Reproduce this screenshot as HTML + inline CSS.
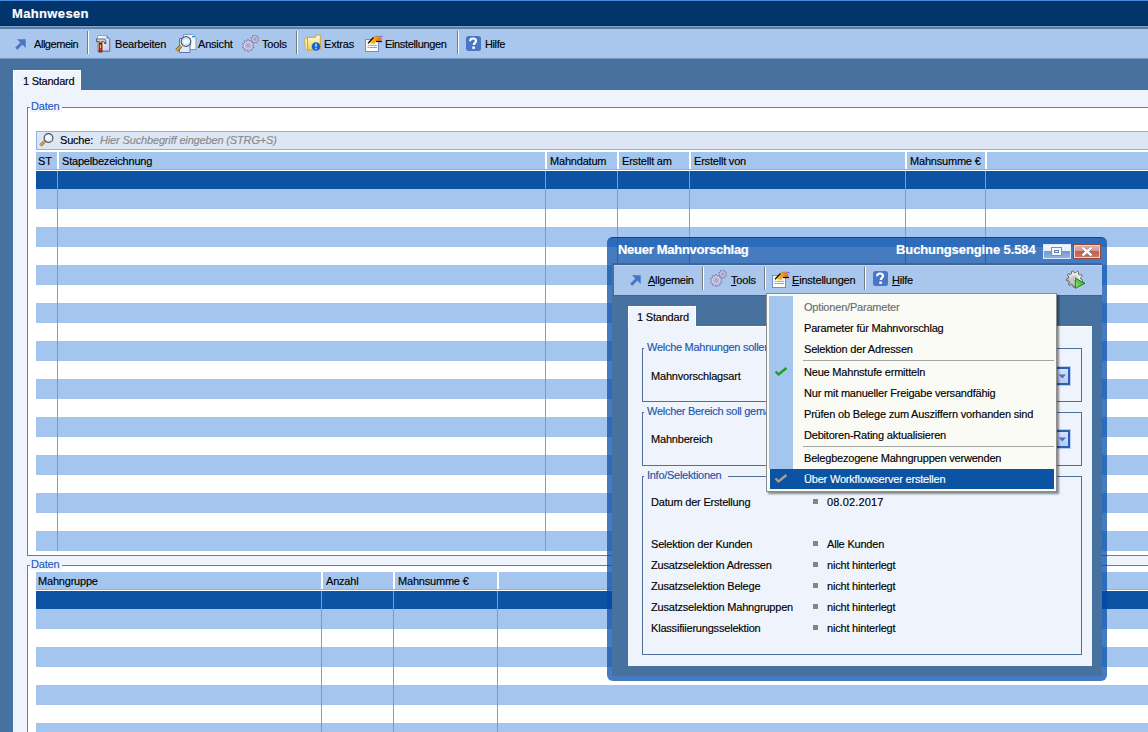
<!DOCTYPE html>
<html><head><meta charset="utf-8">
<style>
*{margin:0;padding:0;box-sizing:border-box}
html,body{width:1148px;height:732px;overflow:hidden;background:#47729f;font-family:"Liberation Sans",sans-serif;font-size:11px;letter-spacing:-0.2px;color:#000;position:relative;-webkit-text-stroke:0.15px currentColor}
.a{position:absolute}
.t{position:absolute;white-space:nowrap;line-height:13px;height:13px}
.sep{position:absolute;width:2px;border-left:1px solid #7a7a7a;border-right:1px solid #fff}
svg{position:absolute;overflow:visible}
</style></head><body>

<div class="a" style="left:0;top:0;width:1148px;height:1px;background:#4a8ee0"></div>
<div class="a" style="left:0;top:1px;width:1148px;height:24px;background:#03356d"></div>
<div class="a" style="left:0;top:25px;width:1148px;height:1px;background:#022a5a"></div>
<div class="a" style="left:0;top:26px;width:1148px;height:1px;background:#8ca6c6"></div>
<div class="a" style="left:0;top:27px;width:1148px;height:2px;background:#5a7eaa"></div>
<div class="t" style="left:12px;top:6px;font-size:13px;line-height:16px;height:16px;font-weight:bold;color:#fff;letter-spacing:0.35px">Mahnwesen</div>
<div class="a" style="left:0;top:29px;width:1148px;height:29px;background:#a9c7ed"></div>
<div class="a" style="left:0;top:58px;width:1148px;height:1px;background:#7495c0"></div>
<svg style="left:15px;top:39px" width="12" height="12"><path d="M1.2 9.8 L6.5 4.5" stroke="#4a72c6" stroke-width="2.9" fill="none"/><path d="M2 0.3 H10.7 V9 L8 6.3 L4.7 3 Z" fill="#4a72c6"/></svg>
<div class="t" style="left:34px;top:38px;letter-spacing:-0.45px">Allgemein</div>
<div class="sep" style="left:87px;top:31px;height:23px"></div>
<svg style="left:96px;top:35px" width="18" height="18"><defs><linearGradient id="gdoc" x1="0" y1="0" x2="1" y2="1"><stop offset="0" stop-color="#ffffff"/><stop offset="1" stop-color="#c8c8f0"/></linearGradient><linearGradient id="ghd" x1="0" y1="0" x2="0" y2="1"><stop offset="0" stop-color="#f4f4f4"/><stop offset="1" stop-color="#8a8a8a"/></linearGradient></defs><path d="M1.5 0.5 H10.5 L13.5 3.5 V16 H1.5 Z" fill="url(#gdoc)" stroke="#8aa0d8" stroke-width="1"/><path d="M13.8 3.5 V16.3 H2" fill="none" stroke="#7a7a7a" stroke-width="1"/><path d="M10.5 0.5 L13.5 3.5 H10.5 Z" fill="#3a8ae8"/><path d="M0.5 4 H8 C9.5 4 10 5.5 10 8.5 H8.5 C8.5 7 8 6.5 7 6.5 H6 V8 H3 V6.5 H0.5 Z" fill="url(#ghd)" stroke="#404040" stroke-width="0.8"/><rect x="3" y="8.5" width="3" height="8.5" fill="#e8320a" stroke="#5a1000" stroke-width="0.8"/><rect x="4" y="10" width="0.9" height="3" fill="#ffd040"/></svg>
<div class="t" style="left:115px;top:38px;">Bearbeiten</div>
<svg style="left:175px;top:35px" width="22" height="18"><path d="M8.5 -0.5 H18 L21 2.5 V14.5 H8.5 Z" fill="#f6f8fc" stroke="#7f97c4" stroke-width="1"/><rect x="17" y="1" width="3" height="1.5" fill="#2aa0c8"/><path d="M4.5 3.5 H15 V17.5 H4.5 Z" fill="#dceaf8" stroke="#6a74a8" stroke-width="1"/><line x1="1.5" y1="15.5" x2="6" y2="11" stroke="#5a5a3a" stroke-width="3.4"/><line x1="1.5" y1="15.5" x2="6" y2="11" stroke="#f0a020" stroke-width="2"/><circle cx="11" cy="6.5" r="4.8" fill="#f4fbff" stroke="#4e5270" stroke-width="1.2"/><circle cx="11" cy="6.5" r="3.2" fill="none" stroke="#b8d8f0" stroke-width="0.8"/></svg>
<div class="t" style="left:198px;top:38px;">Ansicht</div>
<svg style="left:242px;top:35px" width="18" height="18"><polygon points="16.72,5.01 16.48,5.78 15.28,5.94 14.90,6.41 14.97,7.62 14.26,7.99 13.30,7.26 12.69,7.32 11.89,8.22 11.12,7.98 10.96,6.78 10.49,6.40 9.28,6.47 8.91,5.76 9.64,4.80 9.58,4.19 8.68,3.39 8.92,2.62 10.12,2.46 10.50,1.99 10.43,0.78 11.14,0.41 12.10,1.14 12.71,1.08 13.51,0.18 14.28,0.42 14.44,1.62 14.91,2.00 16.12,1.93 16.49,2.64 15.76,3.60 15.82,4.21" fill="#d6d2ea" stroke="#7c78a8" stroke-width="0.9" stroke-linejoin="round"/><circle cx="12.7" cy="4.2" r="1.84" fill="none" stroke="#b0acd0" stroke-width="1"/><circle cx="12.7" cy="4.2" r="0.90" fill="#a9c7ed" stroke="#7c78a8" stroke-width="0.6"/><polygon points="12.08,11.69 11.82,12.60 10.17,12.74 9.77,13.34 10.26,14.92 9.52,15.50 8.09,14.65 7.42,14.89 6.88,16.46 5.94,16.49 5.29,14.97 4.61,14.77 3.25,15.72 2.47,15.20 2.84,13.58 2.40,13.02 0.74,12.99 0.42,12.11 1.67,11.02 1.64,10.30 0.32,9.31 0.58,8.40 2.23,8.26 2.63,7.66 2.14,6.08 2.88,5.50 4.31,6.35 4.98,6.11 5.52,4.54 6.46,4.51 7.11,6.03 7.79,6.23 9.15,5.28 9.93,5.80 9.56,7.42 10.00,7.98 11.66,8.01 11.98,8.89 10.73,9.98 10.76,10.70" fill="#d6d2ea" stroke="#7c78a8" stroke-width="0.9" stroke-linejoin="round"/><circle cx="6.2" cy="10.5" r="2.70" fill="none" stroke="#b0acd0" stroke-width="1"/><circle cx="6.2" cy="10.5" r="1.32" fill="#a9c7ed" stroke="#7c78a8" stroke-width="0.6"/></svg>
<div class="t" style="left:262px;top:38px;">Tools</div>
<div class="sep" style="left:296px;top:31px;height:23px"></div>
<svg style="left:304px;top:35px" width="18" height="18"><defs><linearGradient id="gfold" x1="0" y1="0" x2="0" y2="1"><stop offset="0" stop-color="#fffbe0"/><stop offset="1" stop-color="#f2cf40"/></linearGradient></defs><path d="M0.5 4 L4 2.5 V15 L1.5 14 Z" fill="#fcefb0" stroke="#d8a830" stroke-width="0.9"/><path d="M3.5 2.3 H11.5 L12.3 0 H16.3 V14 L3.5 15.5 Z" fill="url(#gfold)" stroke="#d4a030" stroke-width="1"/><circle cx="12" cy="11.5" r="4.3" fill="#1464d8"/><path d="M11.3 8.8 H12.7 L12.4 12.2 H11.6 Z" fill="#fff"/><rect x="11.4" y="13" width="1.2" height="1.2" fill="#fff"/></svg>
<div class="t" style="left:324px;top:38px;">Extras</div>
<svg style="left:365px;top:35px" width="18" height="18"><defs><linearGradient id="gbr" x1="0" y1="0" x2="1" y2="0"><stop offset="0" stop-color="#f8e020"/><stop offset="1" stop-color="#f06a10"/></linearGradient></defs><rect x="0.5" y="4.5" width="13" height="12" fill="#fffef6" stroke="#6e8ed0" stroke-width="1"/><rect x="2.5" y="9.8" width="2" height="1" fill="#80a4d4"/><rect x="5" y="9.8" width="7" height="1" fill="#80a4d4"/><rect x="2.5" y="12" width="2" height="1" fill="#80a4d4"/><rect x="5" y="12" width="7" height="1" fill="#80a4d4"/><path d="M3 8 L8 2.5 L9 1.2 H15 L16 3 V6 H11 L9.5 9 Z" fill="url(#gbr)"/><path d="M3 8.3 L8.5 2.5" stroke="#101010" stroke-width="1.3"/><path d="M9.5 1.2 H15.5" stroke="#8a8a8a" stroke-width="0.8"/><path d="M11 6.5 H17" stroke="#101010" stroke-width="1.2"/><rect x="15.5" y="1" width="2" height="1" fill="#5a5ad0"/><rect x="15.5" y="3.5" width="2" height="1" fill="#8a8ae0"/></svg>
<div class="t" style="left:385px;top:38px;letter-spacing:-0.35px">Einstellungen</div>
<div class="sep" style="left:457px;top:31px;height:23px"></div>
<svg style="left:466px;top:36px" width="15" height="15"><rect x="0" y="0" width="15" height="15" rx="2.5" fill="#4a76c8"/><path d="M4.1 5.2 C4.1 3.2 5.3 2.5 7 2.5 C8.8 2.5 10 3.4 10 5 C10 6.8 7.8 7 7.8 9" stroke="#fff" stroke-width="2.2" fill="none"/><rect x="6.3" y="10.5" width="2.6" height="2.4" fill="#fff"/></svg>
<div class="t" style="left:485px;top:38px;letter-spacing:-0.4px">Hilfe</div>
<div class="a" style="left:13px;top:90px;width:1135px;height:642px;background:#eff4fc"></div>
<div class="a" style="left:13px;top:70px;width:68px;height:21px;background:#eff4fc;border-top:1px solid #fff;border-left:1px solid #fff;border-right:1px solid #fafcff"></div>
<div class="t" style="left:23px;top:75px;letter-spacing:-0.25px">1 Standard</div>
<div class="a" style="left:27px;top:107px;width:1130px;height:449px;border:1px solid #7a7a7a;background:#fff"></div>
<div class="a" style="left:30px;top:100px;width:32px;height:12px;background:#eff4fc"></div>
<div class="t" style="left:31px;top:100px;color:#1a5cc0">Daten</div>
<div class="a" style="left:36px;top:131px;width:1120px;height:19px;background:#dde6f5;border:1px solid #8fb1e3"></div>
<svg style="left:39px;top:133px" width="14" height="14"><line x1="1.5" y1="12.5" x2="5.5" y2="8.5" stroke="#5a5a50" stroke-width="3"/><line x1="1.5" y1="12.5" x2="5.5" y2="8.5" stroke="#f0a040" stroke-width="1.8"/><circle cx="9.5" cy="5" r="4.4" fill="#d8f0ff" stroke="#4a4a4a" stroke-width="1.1"/><circle cx="9" cy="4.4" r="2.4" fill="#f6fcff"/></svg>
<div class="t" style="left:60px;top:134px;">Suche:</div>
<div class="t" style="left:100px;top:134px;font-style:italic;color:#8a8a8a;letter-spacing:-0.15px">Hier Suchbegriff eingeben (STRG+S)</div>
<div class="a" style="left:36px;top:152px;width:21px;height:17px;background:#a3c5ee"></div>
<div class="a" style="left:59px;top:152px;width:486px;height:17px;background:#a3c5ee"></div>
<div class="a" style="left:547px;top:152px;width:70px;height:17px;background:#a3c5ee"></div>
<div class="a" style="left:619px;top:152px;width:70px;height:17px;background:#a3c5ee"></div>
<div class="a" style="left:691px;top:152px;width:214px;height:17px;background:#a3c5ee"></div>
<div class="a" style="left:907px;top:152px;width:78px;height:17px;background:#a3c5ee"></div>
<div class="a" style="left:987px;top:152px;width:161px;height:17px;background:#a3c5ee"></div>
<div class="a" style="left:36px;top:169px;width:1112px;height:1px;background:#8fb3e2"></div>
<div class="t" style="left:38px;top:155px;">ST</div>
<div class="t" style="left:62px;top:155px;">Stapelbezeichnung</div>
<div class="t" style="left:550px;top:155px;">Mahndatum</div>
<div class="t" style="left:622px;top:155px;">Erstellt am</div>
<div class="t" style="left:694px;top:155px;">Erstellt von</div>
<div class="t" style="left:910px;top:155px;">Mahnsumme €</div>
<div class="a" style="left:36px;top:171px;width:1112px;height:18px;background:#0c53a4"></div>
<div class="a" style="left:36px;top:189px;width:1112px;height:20px;background:#a3c5ee"></div>
<div class="a" style="left:36px;top:227px;width:1112px;height:20px;background:#a3c5ee"></div>
<div class="a" style="left:36px;top:265px;width:1112px;height:20px;background:#a3c5ee"></div>
<div class="a" style="left:36px;top:303px;width:1112px;height:20px;background:#a3c5ee"></div>
<div class="a" style="left:36px;top:341px;width:1112px;height:20px;background:#a3c5ee"></div>
<div class="a" style="left:36px;top:379px;width:1112px;height:20px;background:#a3c5ee"></div>
<div class="a" style="left:36px;top:417px;width:1112px;height:20px;background:#a3c5ee"></div>
<div class="a" style="left:36px;top:455px;width:1112px;height:20px;background:#a3c5ee"></div>
<div class="a" style="left:36px;top:493px;width:1112px;height:20px;background:#a3c5ee"></div>
<div class="a" style="left:36px;top:531px;width:1112px;height:20px;background:#a3c5ee"></div>
<div class="a" style="left:57px;top:171px;width:1px;height:380px;background:#6f9fd8"></div>
<div class="a" style="left:545px;top:171px;width:1px;height:380px;background:#6f9fd8"></div>
<div class="a" style="left:617px;top:171px;width:1px;height:380px;background:#6f9fd8"></div>
<div class="a" style="left:689px;top:171px;width:1px;height:380px;background:#6f9fd8"></div>
<div class="a" style="left:905px;top:171px;width:1px;height:380px;background:#6f9fd8"></div>
<div class="a" style="left:985px;top:171px;width:1px;height:380px;background:#6f9fd8"></div>
<div class="a" style="left:27px;top:565px;width:1130px;height:200px;border:1px solid #7a7a7a;background:#fff"></div>
<div class="a" style="left:30px;top:558px;width:32px;height:12px;background:#eff4fc"></div>
<div class="t" style="left:31px;top:558px;color:#1a5cc0">Daten</div>
<div class="a" style="left:36px;top:572px;width:285px;height:17px;background:#a3c5ee"></div>
<div class="a" style="left:323px;top:572px;width:70px;height:17px;background:#a3c5ee"></div>
<div class="a" style="left:395px;top:572px;width:102px;height:17px;background:#a3c5ee"></div>
<div class="a" style="left:499px;top:572px;width:649px;height:17px;background:#a3c5ee"></div>
<div class="a" style="left:36px;top:589px;width:1112px;height:1px;background:#8fb3e2"></div>
<div class="t" style="left:38px;top:575px;">Mahngruppe</div>
<div class="t" style="left:326px;top:575px;">Anzahl</div>
<div class="t" style="left:398px;top:575px;">Mahnsumme €</div>
<div class="a" style="left:36px;top:591px;width:1112px;height:18px;background:#0c53a4"></div>
<div class="a" style="left:36px;top:609px;width:1112px;height:20px;background:#a3c5ee"></div>
<div class="a" style="left:36px;top:647px;width:1112px;height:20px;background:#a3c5ee"></div>
<div class="a" style="left:36px;top:685px;width:1112px;height:20px;background:#a3c5ee"></div>
<div class="a" style="left:36px;top:723px;width:1112px;height:20px;background:#a3c5ee"></div>
<div class="a" style="left:321px;top:591px;width:1px;height:152px;background:#6f9fd8"></div>
<div class="a" style="left:393px;top:591px;width:1px;height:152px;background:#6f9fd8"></div>
<div class="a" style="left:497px;top:591px;width:1px;height:152px;background:#6f9fd8"></div>
<div class="a" style="left:607px;top:237px;width:500px;height:444px;background:rgba(0,72,168,0.72);border-radius:6px"></div>
<div class="a" style="left:607px;top:237px;width:500px;height:12px;border-top:1px solid rgba(18,52,100,0.75);border-radius:6px 6px 0 0"></div>
<div class="a" style="left:612px;top:263px;width:490px;height:413px;background:#47729f"></div>
<div class="a" style="left:612px;top:263px;width:490px;height:2px;background:#3f6594"></div>
<div class="a" style="left:614px;top:265px;width:488px;height:30px;background:#a9c7ed;border-top:1px solid #bcd6f4"></div>
<div class="a" style="left:612px;top:295px;width:490px;height:1px;background:#3d6390"></div>
<div class="t" style="left:618px;top:242px;font-size:13px;line-height:16px;height:16px;font-weight:bold;color:#fff;letter-spacing:-0.28px">Neuer Mahnvorschlag</div>
<div class="t" style="left:896px;top:242px;font-size:13px;line-height:16px;height:16px;font-weight:bold;color:#fff;letter-spacing:-0.1px">Buchungsengine 5.584</div>
<div class="a" style="left:1043px;top:244px;width:28px;height:15px;border:1px solid #dbe8fa;background:linear-gradient(#f4f8fe 0%,#e6eefa 45%,#6f9ad6 50%,#8fb3e6 100%)"></div>
<div class="a" style="left:1051px;top:247px;width:11px;height:9px;border:1px solid #6c94cc;background:#fbf7ef"></div>
<div class="a" style="left:1054px;top:250px;width:5px;height:3px;border:1px solid #4f7fc7"></div>
<div class="a" style="left:1073px;top:244px;width:28px;height:15px;border:1px solid #8e4a3e;background:linear-gradient(#e8b4ac 0%,#d89a8e 45%,#c0604c 50%,#c87a6a 100%);box-shadow:inset 0 0 0 1px #f2d0c8"></div>
<svg style="left:1080px;top:246px" width="14" height="11"><path d="M2.5 1.5 L11.5 9.5 M11.5 1.5 L2.5 9.5" stroke="#6a6a6a" stroke-width="3.6"/><path d="M2.5 1.5 L11.5 9.5 M11.5 1.5 L2.5 9.5" stroke="#fff" stroke-width="2.4"/></svg>
<svg style="left:630px;top:275px" width="12" height="12"><path d="M1.2 9.8 L6.5 4.5" stroke="#4a72c6" stroke-width="2.9" fill="none"/><path d="M2 0.3 H10.7 V9 L8 6.3 L4.7 3 Z" fill="#4a72c6"/></svg>
<div class="t" style="left:648px;top:274px;letter-spacing:-0.3px"><u style="text-decoration-thickness:1px;text-underline-offset:1px">A</u>llgemein</div>
<div class="sep" style="left:702px;top:267px;height:23px"></div>
<svg style="left:710px;top:270px" width="18" height="18"><polygon points="16.72,5.01 16.48,5.78 15.28,5.94 14.90,6.41 14.97,7.62 14.26,7.99 13.30,7.26 12.69,7.32 11.89,8.22 11.12,7.98 10.96,6.78 10.49,6.40 9.28,6.47 8.91,5.76 9.64,4.80 9.58,4.19 8.68,3.39 8.92,2.62 10.12,2.46 10.50,1.99 10.43,0.78 11.14,0.41 12.10,1.14 12.71,1.08 13.51,0.18 14.28,0.42 14.44,1.62 14.91,2.00 16.12,1.93 16.49,2.64 15.76,3.60 15.82,4.21" fill="#d6d2ea" stroke="#7c78a8" stroke-width="0.9" stroke-linejoin="round"/><circle cx="12.7" cy="4.2" r="1.84" fill="none" stroke="#b0acd0" stroke-width="1"/><circle cx="12.7" cy="4.2" r="0.90" fill="#a9c7ed" stroke="#7c78a8" stroke-width="0.6"/><polygon points="12.08,11.69 11.82,12.60 10.17,12.74 9.77,13.34 10.26,14.92 9.52,15.50 8.09,14.65 7.42,14.89 6.88,16.46 5.94,16.49 5.29,14.97 4.61,14.77 3.25,15.72 2.47,15.20 2.84,13.58 2.40,13.02 0.74,12.99 0.42,12.11 1.67,11.02 1.64,10.30 0.32,9.31 0.58,8.40 2.23,8.26 2.63,7.66 2.14,6.08 2.88,5.50 4.31,6.35 4.98,6.11 5.52,4.54 6.46,4.51 7.11,6.03 7.79,6.23 9.15,5.28 9.93,5.80 9.56,7.42 10.00,7.98 11.66,8.01 11.98,8.89 10.73,9.98 10.76,10.70" fill="#d6d2ea" stroke="#7c78a8" stroke-width="0.9" stroke-linejoin="round"/><circle cx="6.2" cy="10.5" r="2.70" fill="none" stroke="#b0acd0" stroke-width="1"/><circle cx="6.2" cy="10.5" r="1.32" fill="#a9c7ed" stroke="#7c78a8" stroke-width="0.6"/></svg>
<div class="t" style="left:731px;top:274px;"><u style="text-decoration-thickness:1px;text-underline-offset:1px">T</u>ools</div>
<div class="sep" style="left:764px;top:267px;height:23px"></div>
<svg style="left:772px;top:271px" width="18" height="18"><defs><linearGradient id="gbr" x1="0" y1="0" x2="1" y2="0"><stop offset="0" stop-color="#f8e020"/><stop offset="1" stop-color="#f06a10"/></linearGradient></defs><rect x="0.5" y="4.5" width="13" height="12" fill="#fffef6" stroke="#6e8ed0" stroke-width="1"/><rect x="2.5" y="9.8" width="2" height="1" fill="#80a4d4"/><rect x="5" y="9.8" width="7" height="1" fill="#80a4d4"/><rect x="2.5" y="12" width="2" height="1" fill="#80a4d4"/><rect x="5" y="12" width="7" height="1" fill="#80a4d4"/><path d="M3 8 L8 2.5 L9 1.2 H15 L16 3 V6 H11 L9.5 9 Z" fill="url(#gbr)"/><path d="M3 8.3 L8.5 2.5" stroke="#101010" stroke-width="1.3"/><path d="M9.5 1.2 H15.5" stroke="#8a8a8a" stroke-width="0.8"/><path d="M11 6.5 H17" stroke="#101010" stroke-width="1.2"/><rect x="15.5" y="1" width="2" height="1" fill="#5a5ad0"/><rect x="15.5" y="3.5" width="2" height="1" fill="#8a8ae0"/></svg>
<div class="t" style="left:792px;top:274px;"><u style="text-decoration-thickness:1px;text-underline-offset:1px">E</u>instellungen</div>
<div class="sep" style="left:864px;top:267px;height:23px"></div>
<svg style="left:873px;top:271px" width="15" height="15"><rect x="0" y="0" width="15" height="15" rx="2.5" fill="#4a76c8"/><path d="M4.1 5.2 C4.1 3.2 5.3 2.5 7 2.5 C8.8 2.5 10 3.4 10 5 C10 6.8 7.8 7 7.8 9" stroke="#fff" stroke-width="2.2" fill="none"/><rect x="6.3" y="10.5" width="2.6" height="2.4" fill="#fff"/></svg>
<div class="t" style="left:892px;top:274px;"><u style="text-decoration-thickness:1px;text-underline-offset:1px">H</u>ilfe</div>
<svg style="left:1066px;top:270px" width="20" height="19"><defs><linearGradient id="ggear" x1="1" y1="0" x2="0" y2="1"><stop offset="0" stop-color="#ffffff"/><stop offset="0.5" stop-color="#e6e6e6"/><stop offset="1" stop-color="#8c8c8c"/></linearGradient><linearGradient id="gplay" x1="0" y1="1" x2="1" y2="0"><stop offset="0" stop-color="#90f070"/><stop offset="1" stop-color="#20a020"/></linearGradient></defs><polygon points="16.71,10.23 16.37,11.61 13.93,11.90 13.34,12.79 14.02,15.15 12.87,16.00 10.81,14.65 9.80,14.95 8.80,17.20 7.37,17.11 6.67,14.75 5.70,14.33 3.48,15.41 2.45,14.42 3.42,12.16 2.95,11.21 0.56,10.62 0.40,9.20 2.60,8.09 2.85,7.07 1.40,5.08 2.19,3.88 4.59,4.45 5.44,3.82 5.61,1.37 6.98,0.96 8.45,2.93 9.51,3.00 11.21,1.23 12.52,1.80 12.39,4.26 13.15,4.99 15.60,4.73 16.23,6.01 14.55,7.80 14.67,8.85" fill="url(#ggear)" stroke="#5a5a5a" stroke-width="0.9" stroke-linejoin="round"/><circle cx="8.6" cy="9" r="3.2" fill="none" stroke="#c8c8c8" stroke-width="1.2"/><circle cx="8.6" cy="9" r="1.6" fill="#f8f8f8" stroke="#777" stroke-width="0.6"/><path d="M9.3 8.2 L19 13.3 L9.3 18.3 Z" fill="url(#gplay)" stroke="#1a5a1a" stroke-width="0.8"/></svg>
<div class="a" style="left:628px;top:326px;width:464px;height:340px;background:#eff4fc;border-top:1px solid #fff"></div>
<div class="a" style="left:628px;top:306px;width:68px;height:21px;background:#eff4fc;border-top:1px solid #fff;border-left:1px solid #fff;border-right:1px solid #fafcff"></div>
<div class="t" style="left:637px;top:311px;">1 Standard</div>
<div class="a" style="left:642px;top:348px;width:440px;height:54px;border:1px solid #4f6f9c"></div>
<div class="a" style="left:644px;top:342px;width:250px;height:12px;background:#eff4fc"></div>
<div class="t" style="left:647px;top:341px;color:#1e56ac;letter-spacing:-0.28px">Welche Mahnungen sollen gemahnt werden?</div>
<div class="a" style="left:642px;top:412px;width:440px;height:54px;border:1px solid #4f6f9c"></div>
<div class="a" style="left:644px;top:406px;width:220px;height:12px;background:#eff4fc"></div>
<div class="t" style="left:647px;top:405px;color:#1e56ac;letter-spacing:-0.28px">Welcher Bereich soll gemahnt werden?</div>
<div class="a" style="left:642px;top:476px;width:440px;height:179px;border:1px solid #4f6f9c"></div>
<div class="a" style="left:644px;top:470px;width:84px;height:12px;background:#eff4fc"></div>
<div class="t" style="left:647px;top:469px;color:#1e56ac;letter-spacing:-0.28px">Info/Selektionen</div>
<div class="t" style="left:651px;top:370px;">Mahnvorschlagsart</div>
<div class="t" style="left:651px;top:433px;">Mahnbereich</div>
<div class="a" style="left:815px;top:367px;width:256px;height:18px;background:#fff;border:1px solid #7f9db9"></div>
<div class="a" style="left:1055px;top:367px;width:15px;height:18px;border:2px solid #2d5fb4;background:linear-gradient(#d4e2fc,#b4cbf6);box-shadow:0 0 0 1px #b8cdee"></div>
<svg style="left:1058px;top:374px" width="9" height="5"><path d="M0.5 0.5 H8 L4.25 4.5 Z" fill="#4d6fb8"/></svg>
<div class="a" style="left:815px;top:430px;width:256px;height:18px;background:#fff;border:1px solid #7f9db9"></div>
<div class="a" style="left:1055px;top:430px;width:15px;height:18px;border:2px solid #2d5fb4;background:linear-gradient(#d4e2fc,#b4cbf6);box-shadow:0 0 0 1px #b8cdee"></div>
<svg style="left:1058px;top:437px" width="9" height="5"><path d="M0.5 0.5 H8 L4.25 4.5 Z" fill="#4d6fb8"/></svg>
<div class="t" style="left:651px;top:496px;">Datum der Erstellung</div>
<div class="a" style="left:813px;top:499px;width:5px;height:5px;background:#858585"></div>
<div class="t" style="left:827px;top:496px;letter-spacing:0.15px">08.02.2017</div>
<div class="t" style="left:651px;top:538px;">Selektion der Kunden</div>
<div class="a" style="left:813px;top:541px;width:5px;height:5px;background:#858585"></div>
<div class="t" style="left:827px;top:538px;">Alle Kunden</div>
<div class="t" style="left:651px;top:559px;">Zusatzselektion Adressen</div>
<div class="a" style="left:813px;top:562px;width:5px;height:5px;background:#858585"></div>
<div class="t" style="left:827px;top:559px;">nicht hinterlegt</div>
<div class="t" style="left:651px;top:580px;">Zusatzselektion Belege</div>
<div class="a" style="left:813px;top:583px;width:5px;height:5px;background:#858585"></div>
<div class="t" style="left:827px;top:580px;">nicht hinterlegt</div>
<div class="t" style="left:651px;top:601px;">Zusatzselektion Mahngruppen</div>
<div class="a" style="left:813px;top:604px;width:5px;height:5px;background:#858585"></div>
<div class="t" style="left:827px;top:601px;">nicht hinterlegt</div>
<div class="t" style="left:651px;top:622px;">Klassifiierungsselektion</div>
<div class="a" style="left:813px;top:625px;width:5px;height:5px;background:#858585"></div>
<div class="t" style="left:827px;top:622px;">nicht hinterlegt</div>
<div class="a" style="left:766px;top:293px;width:291px;height:199px;background:#fbfbf6;border:1px solid #8c8c8c;box-shadow:2px 2px 2px rgba(0,0,0,0.45)"></div>
<div class="a" style="left:769px;top:296px;width:24px;height:173px;background:#a3c5ee"></div>
<div class="a" style="left:803px;top:360px;width:251px;height:1px;background:#a6a6a6"></div>
<div class="a" style="left:803px;top:446px;width:251px;height:1px;background:#a6a6a6"></div>
<div class="a" style="left:770px;top:469px;width:284px;height:20px;background:#0c53a4"></div>
<div class="t" style="left:804px;top:301px;color:#6d6d6d">Optionen/Parameter</div>
<div class="t" style="left:804px;top:322px;">Parameter für Mahnvorschlag</div>
<div class="t" style="left:804px;top:343px;">Selektion der Adressen</div>
<div class="t" style="left:804px;top:366px;">Neue Mahnstufe ermitteln</div>
<div class="t" style="left:804px;top:387px;">Nur mit manueller Freigabe versandfähig</div>
<div class="t" style="left:804px;top:408px;">Prüfen ob Belege zum Ausziffern vorhanden sind</div>
<div class="t" style="left:804px;top:429px;">Debitoren-Rating aktualisieren</div>
<div class="t" style="left:804px;top:452px;">Belegbezogene Mahngruppen verwenden</div>
<div class="t" style="left:804px;top:473px;color:#fff">Über Workflowserver erstellen</div>
<svg style="left:774px;top:367px" width="14" height="10"><path d="M1.5 4.5 L4.5 7.5 L12.5 1" stroke="#1ca01c" stroke-width="2.4" fill="none"/></svg>
<svg style="left:774px;top:474px" width="14" height="10"><path d="M1.5 4.5 L4.5 7.5 L12.5 1" stroke="#a8a090" stroke-width="2.4" fill="none"/></svg>
</body></html>
